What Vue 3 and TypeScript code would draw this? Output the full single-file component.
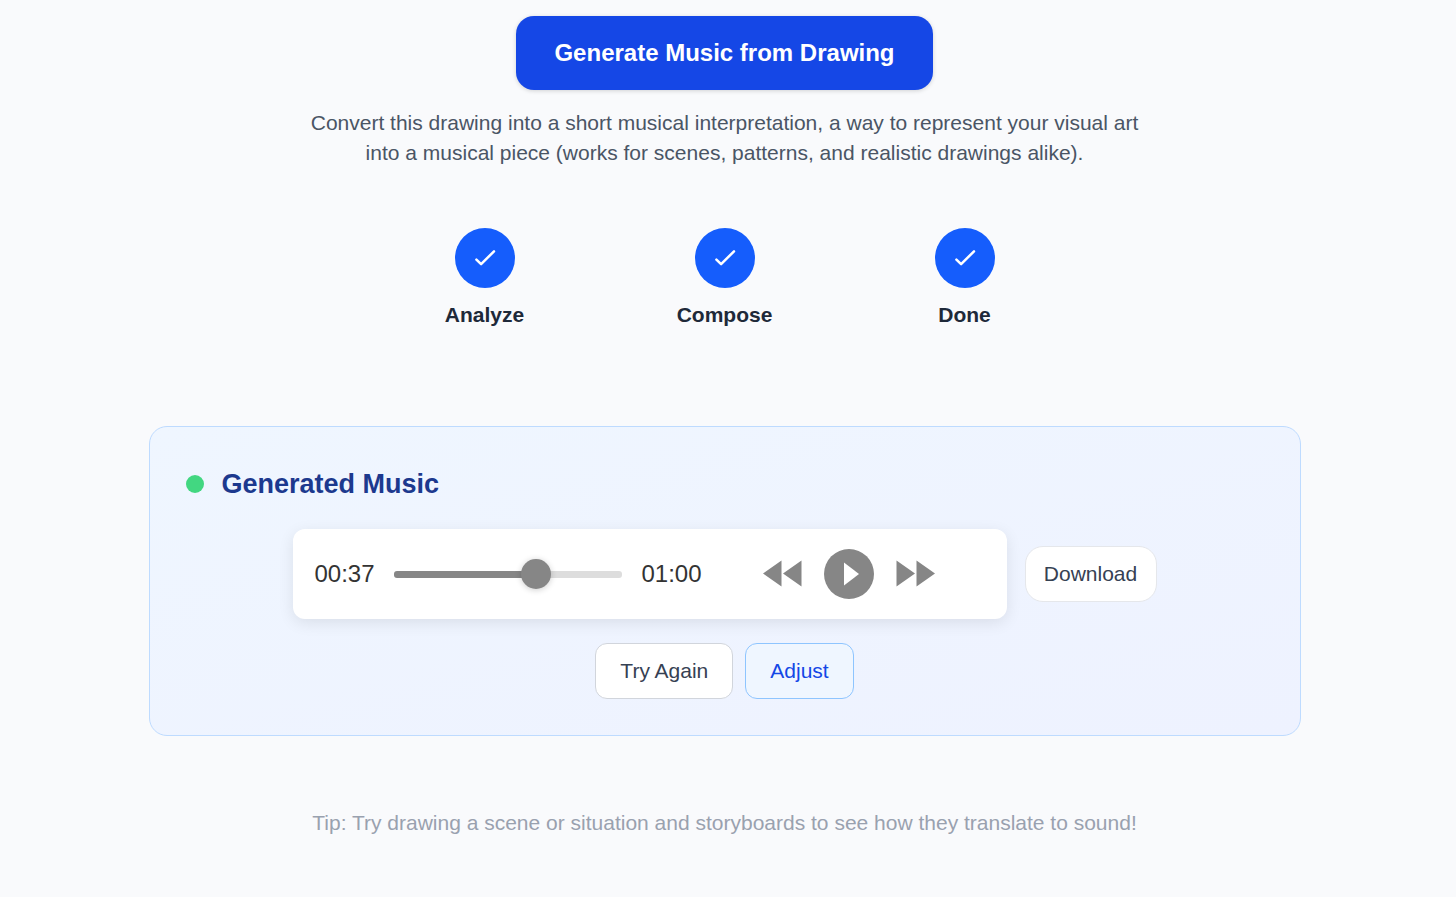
<script setup lang="ts">
import { computed, ref } from 'vue'

const steps: string[] = ['Analyze', 'Compose', 'Done']
const progress = ref(64)
const trackStyle = computed(() => ({ '--progress': `${progress.value}%` }))
</script>

<template>
  <main class="page">
    <button type="button" class="generate">Generate Music from Drawing</button>
    <p class="description">
      Convert this drawing into a short musical interpretation, a way to represent your visual art
      into a musical piece (works for scenes, patterns, and realistic drawings alike).
    </p>

    <ol class="steps">
      <li v-for="step in steps" :key="step" class="step">
        <span class="step-mark">
          <svg width="24" height="24" viewBox="0 0 24 24" fill="none" aria-hidden="true">
            <path d="M3.4 13.6 L8.1 18.2 L21 5.3" stroke="#fff" stroke-width="2.5" stroke-linecap="round" stroke-linejoin="round" />
          </svg>
        </span>
        <span class="step-label">{{ step }}</span>
      </li>
    </ol>

    <section class="card" aria-labelledby="result-title">
      <header class="card-header">
        <span class="status-dot"></span>
        <h2 id="result-title" class="card-title">Generated Music</h2>
      </header>

      <div class="player-row">
        <div class="player">
          <span class="time">00:37</span>
          <input v-model.number="progress" class="track" type="range" min="0" max="100" aria-label="Playback position" :style="trackStyle" />
          <span class="time">01:00</span>
          <div class="controls">
            <button type="button" class="control" aria-label="Rewind">
              <svg width="39" height="28" viewBox="0 0 39 28" fill="#868686" aria-hidden="true">
                <path d="M0 13.5 L18.5 0.5 V26.5 Z M20 13.5 L38.5 0.5 V26.5 Z" />
              </svg>
            </button>
            <button type="button" class="control" aria-label="Play">
              <svg width="50" height="50" viewBox="0 0 50 50" aria-hidden="true">
                <circle cx="25" cy="25" r="25" fill="#868686" />
                <path d="M20 13.5 L35 25 L20 36.5 Z" fill="#fff" />
              </svg>
            </button>
            <button type="button" class="control" aria-label="Fast forward">
              <svg width="39" height="28" viewBox="0 0 39 28" fill="#868686" aria-hidden="true">
                <path d="M0.5 0.5 L19 13.5 L0.5 26.5 Z M20.5 0.5 L39 13.5 L20.5 26.5 Z" />
              </svg>
            </button>
          </div>
        </div>
        <button type="button" class="button download">Download</button>
      </div>

      <div class="actions">
        <button type="button" class="button retry">Try Again</button>
        <button type="button" class="button adjust">Adjust</button>
      </div>
    </section>

    <p class="tip">Tip: Try drawing a scene or situation and storyboards to see how they translate to sound!</p>
  </main>
</template>

<style>
body {
  margin: 0;
  background: #f9fafc;
}
</style>

<style scoped>
.page {
  box-sizing: border-box;
  min-height: 100vh;
  padding: 16px 31px 24px 24px;
  display: flex;
  flex-direction: column;
  align-items: center;
  font-family: "Liberation Sans", Arial, sans-serif;
  font-size: 21px;
  line-height: 30px;
  background: #f9fafc;
}

button {
  font-family: inherit;
  cursor: pointer;
}

.generate {
  padding: 18px 38px;
  border: 0;
  border-radius: 18px;
  background: #1547e6;
  color: #fff;
  font-size: 24px;
  font-weight: 700;
  line-height: 38px;
  box-shadow: 0 1px 4px rgba(0, 0, 0, 0.16);
}

.description {
  max-width: 864px;
  margin: 18px 0 0;
  color: #4a5565;
  text-align: center;
}

.steps {
  display: flex;
  margin: 60px 0 0;
  padding: 0;
  list-style: none;
}

.step {
  width: 240px;
  display: flex;
  flex-direction: column;
  align-items: center;
  gap: 12px;
}

.step-mark {
  width: 60px;
  height: 60px;
  display: flex;
  align-items: center;
  justify-content: center;
  border-radius: 50%;
  background: #155dfc;
}

.step-label {
  color: #1e2939;
  font-weight: 700;
}

.card {
  box-sizing: border-box;
  width: 100%;
  max-width: 1152px;
  margin-top: 96px;
  padding: 36px;
  border: 1px solid #bedbff;
  border-radius: 18px;
  background: linear-gradient(to bottom right, #eff6ff, #eef2ff);
}

.card-header {
  display: flex;
  align-items: center;
  gap: 18px;
}

.status-dot {
  width: 18px;
  height: 18px;
  border-radius: 50%;
  background: #42d781;
}

.card-title {
  margin: 0;
  color: #1c398e;
  font-size: 27px;
  font-weight: 700;
  line-height: 42px;
}

.player-row {
  max-width: 864px;
  margin: 24px auto 0;
  display: flex;
  align-items: center;
  gap: 18px;
}

.player {
  box-sizing: border-box;
  flex: 1;
  min-width: 0;
  height: 90px;
  padding: 0 72px 0 22px;
  display: flex;
  align-items: center;
  gap: 19px;
  border-radius: 12px;
  background: #fff;
  box-shadow: 0 4px 16px rgba(0, 0, 0, 0.09);
}

.time {
  color: #333;
  font-size: 24px;
}

.track {
  appearance: none;
  flex: 1;
  min-width: 0;
  height: 7px;
  margin: 0;
  border-radius: 3px;
  background: linear-gradient(to right, #868686 var(--progress), #ddd var(--progress));
}

.track::-webkit-slider-thumb {
  appearance: none;
  width: 30px;
  height: 30px;
  border-radius: 50%;
  background: #868686;
  box-shadow: 0 1px 6px rgba(0, 0, 0, 0.2);
}

.controls {
  display: flex;
  align-items: center;
  gap: 22px;
  margin-left: 42px;
}

.control {
  display: flex;
  padding: 0;
  border: 0;
  background: none;
}

.button {
  padding: 12px 24px;
  border: 1px solid #d1d5dc;
  border-radius: 12px;
  background: #fff;
  color: #364153;
  font-size: 21px;
  line-height: 30px;
}

.download {
  min-width: 132px;
  padding: 12px 18px;
  border-color: #e5e7eb;
  border-radius: 18px;
}

.actions {
  display: flex;
  justify-content: center;
  gap: 12px;
  margin-top: 24px;
}

.adjust {
  border-color: #8ec5ff;
  background: #eff6ff;
  color: #1447e6;
}

.tip {
  margin: 72px 0 0;
  color: #99a1af;
  text-align: center;
}
</style>
